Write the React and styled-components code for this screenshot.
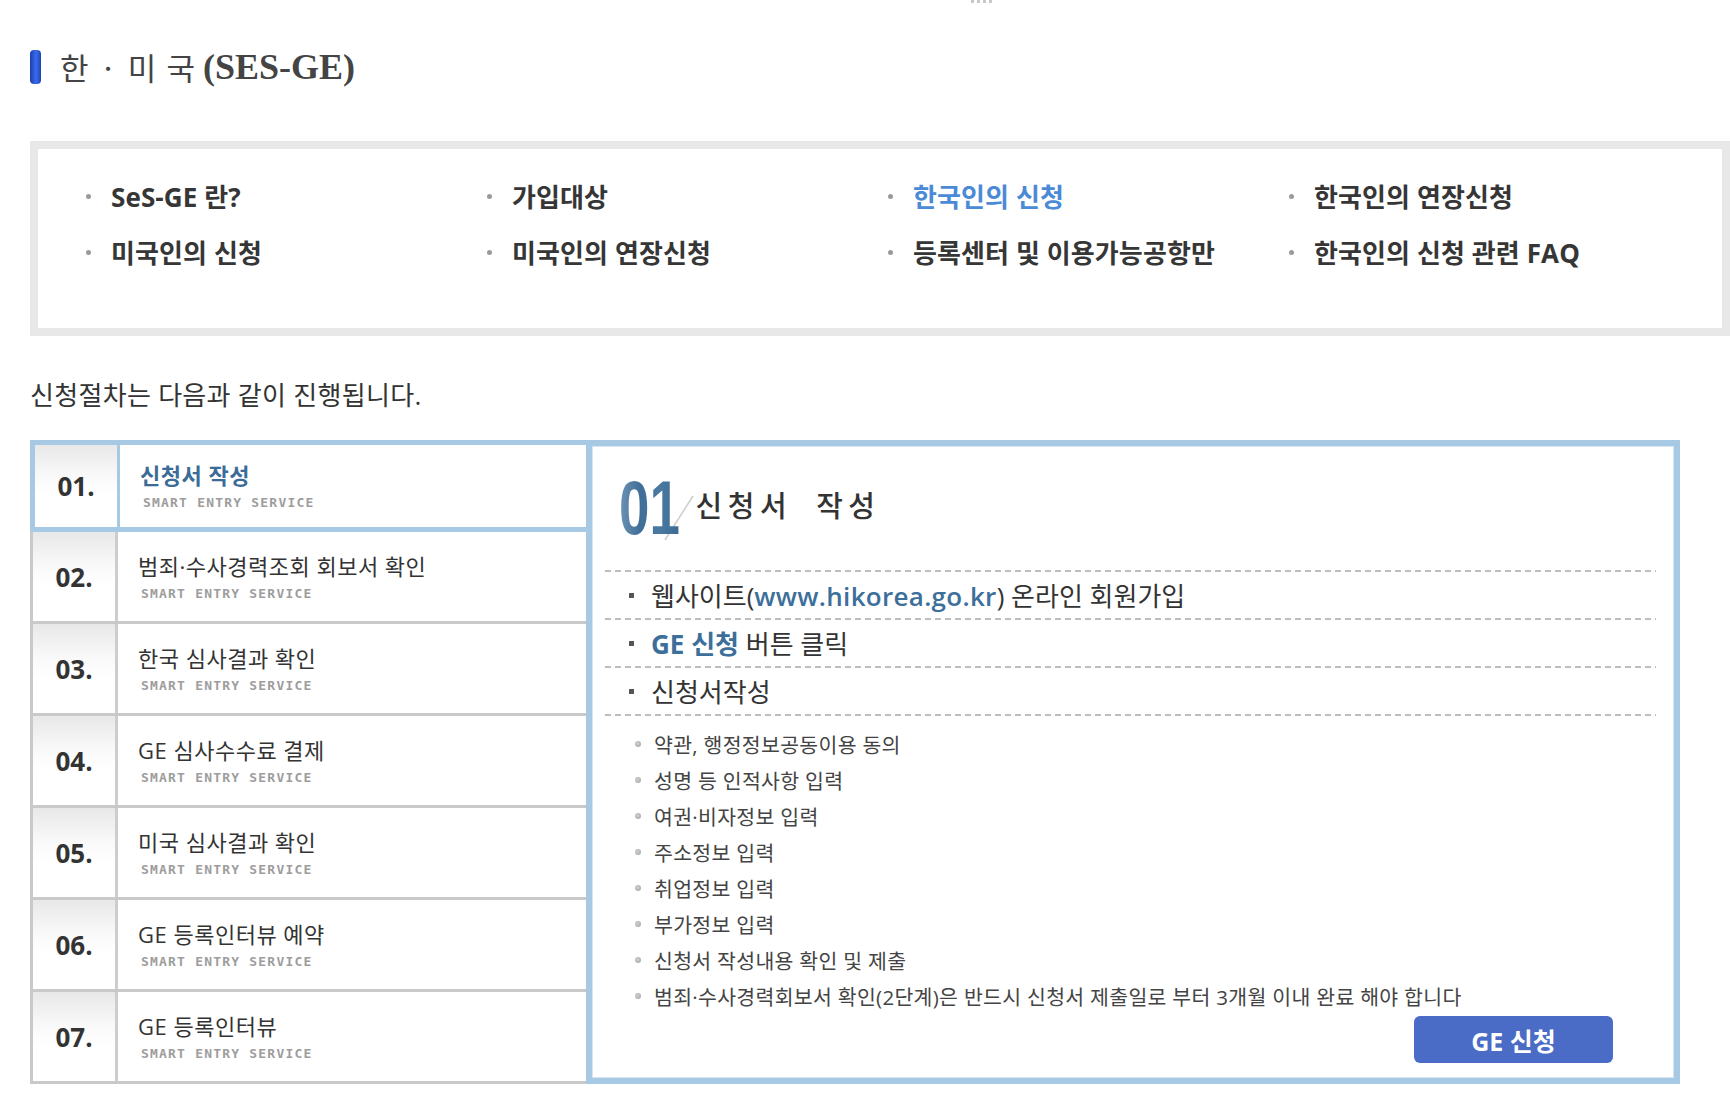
import React from 'react';
import styled, { createGlobalStyle, css } from 'styled-components';

const sans = `"Open Sans", "Noto Sans CJK KR", sans-serif`;
const dash = 'repeating-linear-gradient(to right, #bdbdbd 0 6px, transparent 6px 10px)';

const GlobalStyle = createGlobalStyle`
	html, body {
		margin: 0;
		background: #fff;
		font-family: ${sans};
		color: #333;
	}
	ul {
		margin: 0;
		padding: 0;
		list-style: none;
	}
`;

const Page = styled.div`
		width: 1730px;
		box-sizing: border-box;
		padding-left: 30px;
		overflow: hidden;
	`,
	TopMark = styled.div`
		height: 4px;
		& span {
			display: block;
			margin-left: 941px;
			width: 22px;
			height: 3px;
			background: repeating-linear-gradient(to right, #c8c8c8 0 3px, transparent 3px 6px);
		}
	`,
	TitleRow = styled.h1`
		margin: 46px 0 0;
		display: flex;
		align-items: center;
		gap: 19px;
		height: 34px;
		font-weight: normal;
	`,
	TitleBar = styled.span`
		width: 11px;
		height: 34px;
		border-radius: 4px;
		background: linear-gradient(to right, #1a3fa8, #3a6cf0 55%, #1d44b3);
	`,
	TitleText = styled.span`
		display: flex;
		align-items: center;
		color: #444;
		line-height: 34px;
	`,
	TitleKo = styled.span`
		font-family: "Noto Sans CJK KR", sans-serif;
		font-size: 31px;
		letter-spacing: 2px;
		margin-right: 6px;
		white-space: pre;
	`,
	TitleEn = styled.span`
		font-family: "Liberation Serif", serif;
		font-weight: 700;
		font-size: 36px;
	`,
	Nav = styled.div`
		margin-top: 57px;
		border: 8px solid #e8e8e8;
		padding: 19px 0 48px 48px;
		display: grid;
		grid-template-columns: repeat(4, 401px);
		grid-auto-rows: 56px;
		align-items: center;
	`,
	NavItem = styled.a`
		display: flex;
		align-items: center;
		gap: 20px;
		font-size: 26px;
		font-weight: 700;
		letter-spacing: 0.1px;
		color: ${( { active } ) => active ? '#4b8ad6' : '#363636'};
		text-decoration: none;
		&::before {
			content: '';
			width: 5px;
			height: 5px;
			border-radius: 50%;
			background: #9a9a9a;
		}
	`,
	Intro = styled.p`
		margin: 44px 0 0;
		font-size: 26px;
		line-height: 30px;
		color: #333;
		letter-spacing: 0.3px;
	`,
	Steps = styled.div`
		margin-top: 30px;
		width: 1650px;
		display: flex;
	`,
	StepList = styled.ul`
		width: 556px;
		flex: 0 0 556px;
	`,
	StepRow = styled.li`
		height: 92px;
		box-sizing: border-box;
		display: flex;
		border-left: 3px solid #c9c9c9;
		border-bottom: 3px solid #c9c9c9;
		${( { active } ) => active && css`
			border: 5px solid #a7c9e4;
			border-right: none;
		`}
	`,
	NumCell = styled.div`
		width: 85px;
		box-sizing: border-box;
		display: flex;
		align-items: center;
		justify-content: center;
		border-right: 3px solid ${( { active } ) => active ? '#a7c9e4' : '#cdcdcd'};
		background: linear-gradient(180deg, #e8e8e8 0%, #f8f8f8 35%, #fff 60%);
		font-size: 26px;
		font-weight: 700;
		letter-spacing: 0;
		color: #333;
	`,
	TextCell = styled.div`
		flex: 1;
		padding-left: 20px;
		display: flex;
		flex-direction: column;
		justify-content: center;
		gap: 8px;
	`,
	StepTitle = styled.span`
		font-size: 22px;
		line-height: 26px;
		letter-spacing: 0.5px;
		font-weight: ${( { active } ) => active ? 700 : 400};
		color: ${( { active } ) => active ? '#3b6c98' : '#333'};
	`,
	StepSub = styled.span`
		font-family: "DejaVu Sans Mono", monospace;
		font-weight: 700;
		font-size: 13px;
		line-height: 14px;
		letter-spacing: 1.2px;
		color: #9d9d9d;
		padding-left: 3px;
	`,
	Detail = styled.section`
		flex: 1;
		border: 6px solid #a7c9e4;
		box-shadow: inset 0 0 0 1px #d6e5f1;
		padding: 0 18px 13px 13px;
		display: flex;
		flex-direction: column;
	`,
	Header = styled.div`
		position: relative;
		height: 124px;
		display: flex;
		align-items: center;
		padding-left: 14px;
	`,
	BigNum = styled.span`
		display: inline-block;
		font-family: "Liberation Sans", sans-serif;
		font-weight: 700;
		font-size: 76px;
		line-height: 1;
		transform: scaleX(0.72);
		transform-origin: left center;
		margin-right: -24px;
		background: linear-gradient(to right, #6f94b6, #3f6e97 35%, #4a79a2 65%, #3c6a92);
		-webkit-background-clip: text;
		background-clip: text;
		color: transparent;
		position: relative;
		z-index: 1;
	`,
	Slash = styled.svg`
		position: absolute;
		left: 58px;
		top: 48px;
	`,
	HeaderTitle = styled.h2`
		margin: 0 0 8px 16px;
		font-family: "Noto Sans CJK KR", sans-serif;
		font-size: 29px;
		font-weight: 500;
		letter-spacing: 5.5px;
		color: #333;
		white-space: pre;
		position: relative;
		z-index: 1;
	`,
	MainList = styled.ul``,
	MainItem = styled.li`
		height: 48px;
		box-sizing: border-box;
		padding: 2px 0 0 24px;
		display: flex;
		align-items: center;
		gap: 17px;
		font-size: 26px;
		letter-spacing: 0;
		color: #333;
		background: ${dash} top left / 100% 2px no-repeat;
		&:last-child {
			height: 50px;
			padding-bottom: 2px;
			background: ${dash} top left / 100% 2px no-repeat, ${dash} bottom left / 100% 2px no-repeat;
		}
		&::before {
			content: '';
			width: 5px;
			height: 5px;
			background: #555;
			flex: 0 0 auto;
		}
	`,
	Accent = styled.b`
		color: #3d6f9b;
		font-weight: ${( { heavy } ) => heavy ? 700 : 600};
		letter-spacing: ${( { heavy } ) => heavy ? 0 : 0.3}px;
	`,
	SubList = styled.ul`
		margin-top: 10px;
	`,
	SubItem = styled.li`
		height: 36px;
		display: flex;
		align-items: center;
		gap: 13px;
		padding-left: 30px;
		font-size: 20.5px;
		letter-spacing: 0.3px;
		color: #444;
		&::before {
			content: '';
			width: 6px;
			height: 6px;
			border-radius: 50%;
			background: radial-gradient(circle at 40% 40%, #d0d0d0, #a0a0a0);
			flex: 0 0 auto;
		}
	`,
	ButtonRow = styled.div`
		margin-top: 2px;
		display: flex;
		justify-content: flex-end;
		padding-right: 43px;
	`,
	ApplyButton = styled.button`
		width: 199px;
		height: 47px;
		border: none;
		border-radius: 6px;
		background: #4a6bc6;
		color: #fff;
		font-family: ${sans};
		font-size: 25px;
		font-weight: 700;
		cursor: pointer;
	`;

const navLinks = [
		{ label: 'SeS-GE 란?' },
		{ label: '가입대상' },
		{ label: '한국인의 신청', active: true },
		{ label: '한국인의 연장신청' },
		{ label: '미국인의 신청' },
		{ label: '미국인의 연장신청' },
		{ label: '등록센터 및 이용가능공항만' },
		{ label: '한국인의 신청 관련 FAQ' }
	],
	steps = [
		'신청서 작성',
		'범죄·수사경력조회 회보서 확인',
		'한국 심사결과 확인',
		'GE 심사수수료 결제',
		'미국 심사결과 확인',
		'GE 등록인터뷰 예약',
		'GE 등록인터뷰'
	],
	subItems = [
		'약관, 행정정보공동이용 동의',
		'성명 등 인적사항 입력',
		'여권·비자정보 입력',
		'주소정보 입력',
		'취업정보 입력',
		'부가정보 입력',
		'신청서 작성내용 확인 및 제출',
		'범죄·수사경력회보서 확인(2단계)은 반드시 신청서 제출일로 부터 3개월 이내 완료 해야 합니다'
	];

const App = () => {
	return (
		<Page>
			<GlobalStyle />
			<TopMark><span /></TopMark>
			{/* Page title */}
			<TitleRow>
				<TitleBar />
				<TitleText>
					<TitleKo>{'한 · 미\u2009국'}</TitleKo>
					<TitleEn>(SES-GE)</TitleEn>
				</TitleText>
			</TitleRow>
			{/* Sub navigation */}
			<Nav>
				{navLinks.map( ( link ) => (
					<NavItem key={link.label} href='#' active={link.active ? 1 : 0}>
						{link.label}
					</NavItem>
				) )}
			</Nav>
			<Intro>신청절차는 다음과 같이 진행됩니다.</Intro>
			<Steps>
				{/* Step list */}
				<StepList>
					{steps.map( ( title, i ) => (
						<StepRow key={title} active={i === 0 ? 1 : 0}>
							<NumCell active={i === 0 ? 1 : 0}>{`0${i + 1}.`}</NumCell>
							<TextCell>
								<StepTitle active={i === 0 ? 1 : 0}>{title}</StepTitle>
								<StepSub>SMART ENTRY SERVICE</StepSub>
							</TextCell>
						</StepRow>
					) )}
				</StepList>
				{/* Step detail */}
				<Detail>
					<Header>
						<BigNum>01</BigNum>
						<Slash width='32' height='48' viewBox='0 0 32 48'>
							<line x1='2' y1='46' x2='30' y2='2' stroke='#cfcfcf' strokeWidth='1.6' />
						</Slash>
						<HeaderTitle>{'신청서  작성'}</HeaderTitle>
					</Header>
					<MainList>
						<MainItem>
							<span>웹사이트(<Accent>www.hikorea.go.kr</Accent>) 온라인 회원가입</span>
						</MainItem>
						<MainItem>
							<span><Accent heavy={1}>GE 신청</Accent> 버튼 클릭</span>
						</MainItem>
						<MainItem>
							<span>신청서작성</span>
						</MainItem>
					</MainList>
					<SubList>
						{subItems.map( ( text ) => <SubItem key={text}>{text}</SubItem> )}
					</SubList>
					<ButtonRow>
						<ApplyButton type='button'>GE 신청</ApplyButton>
					</ButtonRow>
				</Detail>
			</Steps>
		</Page>
	);
};

export default App;
